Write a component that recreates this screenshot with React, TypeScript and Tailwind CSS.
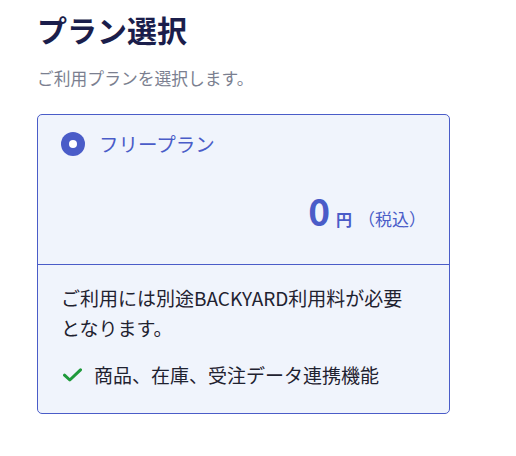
import React from "react";

export default function App() {
  const font = { fontFamily: '"Noto Sans CJK JP", "Noto Sans", sans-serif' };
  return (
    <div className="min-h-[456px] w-[516px] bg-white" style={font}>
      <div className="pl-[37px] pt-[11px]">
        <h1 className="text-[30px] font-bold leading-[36px] text-[#1b1e4b]">プラン選択</h1>
        <p className="mt-[19px] text-[16.8px] leading-[24px] text-[#7b7f90]">ご利用プランを選択します。</p>
        <div className="mt-[24px] w-[413px] rounded-[5px] border border-[#4a5cc8] bg-[#f0f4fc]">
          <div className="border-b border-[#4a5cc8] px-[23px] pb-[32px] pt-[15px]">
            <div className="flex h-[28px] items-center gap-[14px]">
              <span className="flex h-[24px] w-[24px] items-center justify-center rounded-full bg-[#4a5cc8]">
                <span className="h-[8px] w-[8px] rounded-full bg-white" />
              </span>
              <span className="text-[19.5px] leading-[28px] text-[#4a5cc8]">フリープラン</span>
            </div>
            <div className="mt-[32px] flex items-baseline justify-end text-[#4a5cc8]">
              <span className="text-[37px] font-bold leading-[40px]">0</span>
              <span className="ml-[6px] text-[16px] font-bold">円</span>
              <span className="ml-[6px] text-[17px]">（税込）</span>
            </div>
          </div>
          <div className="px-[23px] pb-[23px] pt-[18px] text-[#1f2230]">
            <p className="text-[19px] leading-[30px]">
              ご利用には別途BACKYARD利用料が必要
              <br />
              となります。
            </p>
            <div className="mt-[17px] flex items-center gap-[12px]">
              <svg width="19" height="14" viewBox="0 0 19 14" className="ml-[2px]">
                <path d="M1.5 7.2 L6.8 12 L17.5 1.8" fill="none" stroke="#1f9a3c" strokeWidth="3" strokeLinecap="round" strokeLinejoin="round" />
              </svg>
              <span className="text-[19px] leading-[30px]">商品、在庫、受注データ連携機能</span>
            </div>
          </div>
        </div>
      </div>
    </div>
  );
}
